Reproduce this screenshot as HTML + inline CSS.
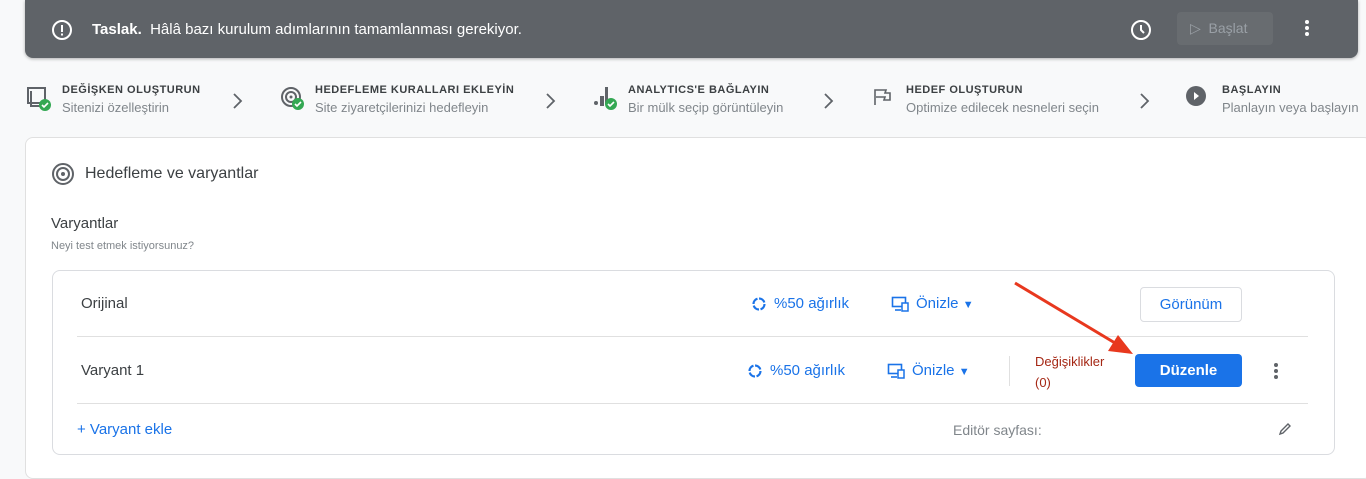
<!DOCTYPE html><html><head><meta charset="utf-8"><style>
body{margin:0;width:1366px;height:473px;background:#f8f9fa;font-family:"Liberation Sans",sans-serif;position:relative;overflow:hidden;color:#202124}
.a{position:absolute;white-space:nowrap}
.ban{left:25px;top:0;width:1333px;height:58px;background:#5f6368;border-radius:0 0 8px 8px;box-shadow:0 1px 3px rgba(0,0,0,.3)}
.st{font-size:11px;font-weight:bold;letter-spacing:.5px;color:#3c4043}
.ss{font-size:13px;color:#80868b}
.blue{color:#1a73e8;font-size:15px}
</style></head><body>
<div class="a ban"></div>
<svg class="a" style="left:50px;top:18px" width="24" height="24"><circle cx="12" cy="12" r="9" fill="none" stroke="#fff" stroke-width="2"/><rect x="11" y="7" width="2" height="7" fill="#fff"/><rect x="11" y="15.5" width="2" height="2" fill="#fff"/></svg>
<div class="a" style="left:92px;top:21px;color:#fff;font-size:15px"><b>Taslak.</b>&nbsp;&nbsp;Hâlâ bazı kurulum adımlarının tamamlanması gerekiyor.</div>
<svg class="a" style="left:1129px;top:18px" width="24" height="24"><circle cx="12" cy="12" r="9" fill="none" stroke="#fff" stroke-width="2"/><path d="M12 7v5l3 3" stroke="#fff" stroke-width="2" fill="none"/></svg>
<div class="a" style="left:1177px;top:12px;width:96px;height:33px;background:#686c70;border-radius:4px"></div>
<div class="a" style="left:1190px;top:20px;color:#9aa0a6;font-size:14px">▷&nbsp; Başlat</div>
<div class="a" style="left:1305px;top:20px;width:4px;height:4px;background:#fff;border-radius:2px;box-shadow:0 6px #fff,0 12px #fff"></div>

<svg class="a" style="left:26px;top:86px" width="26" height="26"><rect x="2" y="2" width="17" height="15" fill="none" stroke="#5f6368" stroke-width="2"/><path d="M5 5v15h12" stroke="#5f6368" stroke-width="2" fill="none"/><circle cx="19" cy="19" r="6" fill="#34a853"/><path d="M16 19l2 2 4-4" stroke="#fff" stroke-width="1.6" fill="none"/></svg>
<div class="a st" style="left:62px;top:84px">DEĞİŞKEN OLUŞTURUN</div><div class="a ss" style="left:62px;top:100px">Sitenizi özelleştirin</div>
<svg class="a" style="left:232px;top:92px" width="12" height="18"><path d="M2 2l7 7-7 7" stroke="#5f6368" stroke-width="1.8" fill="none"/></svg>
<svg class="a" style="left:280px;top:86px" width="26" height="26"><circle cx="11" cy="11" r="9" fill="none" stroke="#5f6368" stroke-width="2"/><circle cx="11" cy="11" r="5" fill="none" stroke="#5f6368" stroke-width="2"/><circle cx="11" cy="11" r="1.5" fill="#5f6368"/><circle cx="18" cy="18" r="6" fill="#34a853"/><path d="M15 18l2 2 4-4" stroke="#fff" stroke-width="1.6" fill="none"/></svg>
<div class="a st" style="left:315px;top:84px">HEDEFLEME KURALLARI EKLEYİN</div><div class="a ss" style="left:315px;top:100px">Site ziyaretçilerinizi hedefleyin</div>
<svg class="a" style="left:545px;top:92px" width="12" height="18"><path d="M2 2l7 7-7 7" stroke="#5f6368" stroke-width="1.8" fill="none"/></svg>
<svg class="a" style="left:592px;top:84px" width="28" height="28"><circle cx="4" cy="19" r="2" fill="#5f6368"/><rect x="8" y="12" width="4" height="10" fill="#5f6368"/><rect x="13" y="3" width="3" height="17" fill="#5f6368"/><circle cx="19" cy="20" r="6" fill="#34a853"/><path d="M16 20l2 2 4-4" stroke="#fff" stroke-width="1.6" fill="none"/></svg>
<div class="a st" style="left:628px;top:84px">ANALYTICS'E BAĞLAYIN</div><div class="a ss" style="left:628px;top:100px">Bir mülk seçip görüntüleyin</div>
<svg class="a" style="left:823px;top:92px" width="12" height="18"><path d="M2 2l7 7-7 7" stroke="#5f6368" stroke-width="1.8" fill="none"/></svg>
<svg class="a" style="left:872px;top:87px" width="20" height="20"><path d="M3 18V3h11l-1 3h5v7h-6l1-3H4" stroke="#5f6368" stroke-width="1.6" fill="none"/></svg>
<div class="a st" style="left:906px;top:84px">HEDEF OLUŞTURUN</div><div class="a ss" style="left:906px;top:100px">Optimize edilecek nesneleri seçin</div>
<svg class="a" style="left:1139px;top:92px" width="12" height="18"><path d="M2 2l7 7-7 7" stroke="#5f6368" stroke-width="1.8" fill="none"/></svg>
<svg class="a" style="left:1185px;top:85px" width="24" height="24"><circle cx="11" cy="11" r="10" fill="#5f6368"/><path d="M9 7l5 4-5 4z" fill="#fff"/></svg>
<div class="a st" style="left:1222px;top:84px">BAŞLAYIN</div><div class="a ss" style="left:1222px;top:100px">Planlayın veya başlayın</div>

<div class="a" style="left:25px;top:137px;width:1345px;height:340px;background:#fff;border:1px solid #e0e0e0;border-radius:8px"></div>
<svg class="a" style="left:51px;top:162px" width="24" height="24"><circle cx="12" cy="12" r="10" fill="none" stroke="#5f6368" stroke-width="2"/><circle cx="12" cy="12" r="6" fill="none" stroke="#5f6368" stroke-width="2"/><circle cx="12" cy="12" r="2" fill="#5f6368"/></svg>
<div class="a" style="left:85px;top:165px;font-size:16px;color:#3c4043">Hedefleme ve varyantlar</div>
<div class="a" style="left:51px;top:215px;font-size:15px;color:#3c4043">Varyantlar</div>
<div class="a" style="left:51px;top:240px;font-size:11px;color:#80868b">Neyi test etmek istiyorsunuz?</div>
<div class="a" style="left:52px;top:270px;width:1281px;height:183px;border:1px solid #dadce0;border-radius:8px;background:#fff"></div>
<div class="a" style="left:77px;top:336px;width:1231px;height:1px;background:#e0e0e0"></div>
<div class="a" style="left:77px;top:403px;width:1231px;height:1px;background:#e0e0e0"></div>
<div class="a" style="left:81px;top:295px;font-size:15px;color:#3c4043">Orijinal</div>
<div class="a" style="left:81px;top:362px;font-size:15px;color:#3c4043">Varyant 1</div>
<svg class="a" style="left:751px;top:296px" width="16" height="16"><circle cx="8" cy="8" r="5.5" fill="none" stroke="#1a73e8" stroke-width="2.2" stroke-dasharray="7 1.6"/></svg>
<div class="a blue" style="left:774px;top:295px">%50 ağırlık</div>
<svg class="a" style="left:891px;top:296px" width="20" height="16"><rect x="1.5" y="1.5" width="13" height="9" fill="none" stroke="#1a73e8" stroke-width="1.6"/><rect x="11" y="7" width="6" height="8" fill="#fff" stroke="#1a73e8" stroke-width="1.5"/><path d="M4 14h6" stroke="#1a73e8" stroke-width="1.6"/></svg>
<div class="a blue" style="left:916px;top:295px">Önizle <span style="font-size:11px">▼</span></div>
<svg class="a" style="left:747px;top:363px" width="16" height="16"><circle cx="8" cy="8" r="5.5" fill="none" stroke="#1a73e8" stroke-width="2.2" stroke-dasharray="7 1.6"/></svg>
<div class="a blue" style="left:770px;top:362px">%50 ağırlık</div>
<svg class="a" style="left:887px;top:363px" width="20" height="16"><rect x="1.5" y="1.5" width="13" height="9" fill="none" stroke="#1a73e8" stroke-width="1.6"/><rect x="11" y="7" width="6" height="8" fill="#fff" stroke="#1a73e8" stroke-width="1.5"/><path d="M4 14h6" stroke="#1a73e8" stroke-width="1.6"/></svg>
<div class="a blue" style="left:912px;top:362px">Önizle <span style="font-size:11px">▼</span></div>
<div class="a" style="left:1009px;top:356px;width:1px;height:30px;background:#e0e0e0"></div>
<div class="a" style="left:1035px;top:351px;font-size:13px;color:#a52714;line-height:21px">Değişiklikler<br>(0)</div>
<div class="a" style="left:1140px;top:287px;width:100px;height:33px;border:1px solid #dadce0;border-radius:4px;text-align:center;line-height:33px;font-size:15px;color:#1a73e8">Görünüm</div>
<div class="a" style="left:1135px;top:354px;width:107px;height:33px;background:#1a73e8;border-radius:4px;text-align:center;line-height:33px;font-size:15px;color:#fff;font-weight:bold">Düzenle</div>
<div class="a" style="left:1274px;top:363px;width:4px;height:4px;background:#5f6368;border-radius:2px;box-shadow:0 6px #5f6368,0 12px #5f6368"></div>
<div class="a" style="left:77px;top:421px;font-size:15px;color:#1a73e8">+ Varyant ekle</div>
<div class="a" style="left:953px;top:422px;font-size:14px;color:#80868b">Editör sayfası:</div>
<svg class="a" style="left:1277px;top:421px" width="16" height="16"><path d="M3 13l1-3 7-7 2 2-7 7z" fill="none" stroke="#5f6368" stroke-width="1.4"/></svg>
<svg class="a" style="left:0;top:0" width="1366" height="473"><line x1="1015" y1="283" x2="1115" y2="343" stroke="#e8381e" stroke-width="3"/><path d="M1133 354l-25-3 10-16z" fill="#e8381e"/></svg>
</body></html>
